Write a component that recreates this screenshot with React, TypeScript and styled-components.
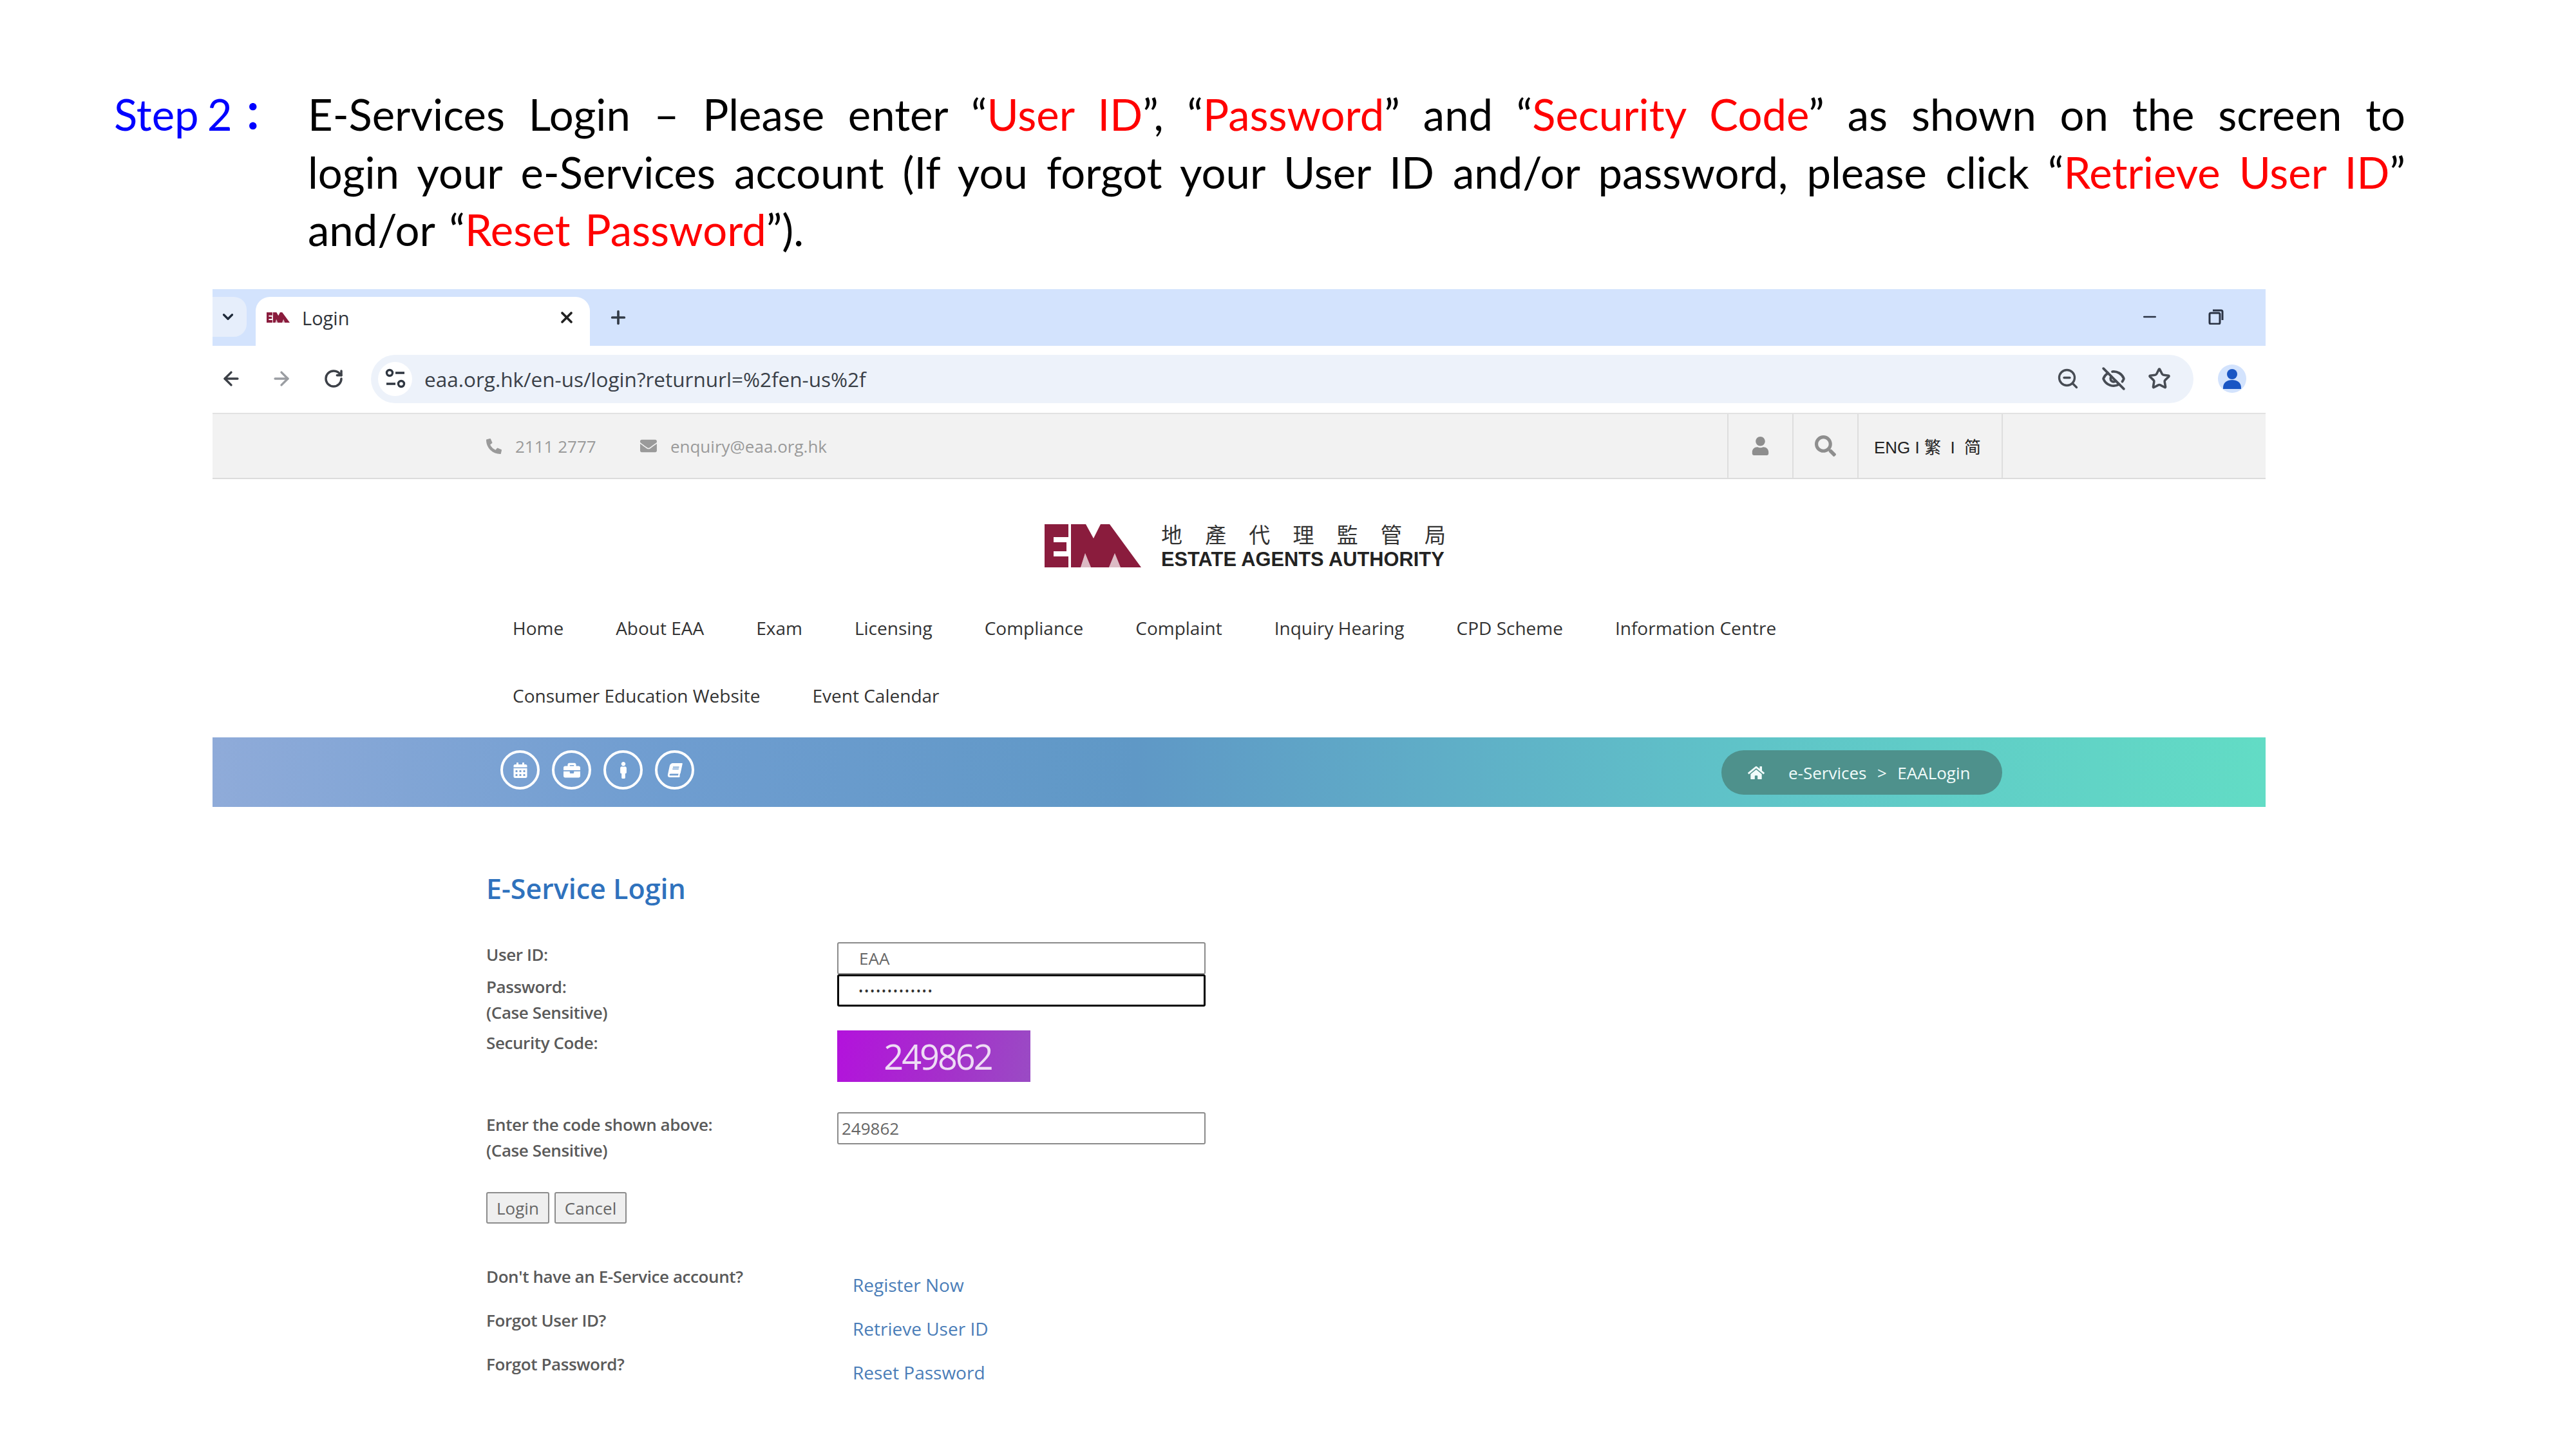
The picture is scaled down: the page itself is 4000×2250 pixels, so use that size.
import React from "react";
import styled, { createGlobalStyle } from "styled-components";
import { ArrowLeft, ArrowRight, ChevronDown, EyeOff, Minus, Plus, RotateCw, Star, X, ZoomOut } from "lucide-react";
import { FaBook, FaBriefcase, FaCalendarAlt, FaEnvelope, FaHome, FaMale, FaPhoneAlt, FaSearch, FaUser } from "react-icons/fa";

const GlobalStyle = createGlobalStyle`
  html, body { margin: 0; padding: 0; background: #fff; }
  #root { width: 4000px; height: 2250px; overflow: hidden; }
  * { box-sizing: border-box; }
`;

const Page = styled.div`
  width: 4000px;
  height: 2250px;
  padding: 133px 265px 0 177px;
  background: #fff;
`;

const Instruction = styled.div`
  display: flex;
  height: 269px;
  font: 400 67px/89.5px Lato, "Noto Sans", sans-serif;
  color: #000;
`;

const StepLabel = styled.div`
  flex: 0 0 301px;
  color: #0000ff;
  white-space: nowrap;
  word-spacing: -4px;
`;

const Colon = styled.span`
  margin-left: 2px;
  font-family: "Noto Sans CJK TC", sans-serif;
  font-weight: 700;
  font-size: 60px;
  line-height: 1;
`;

const InstructionText = styled.div`
  flex: 1;
`;

const Line = styled.div<{ $justify?: boolean }>`
  text-align: ${(p) => (p.$justify ? "justify" : "left")};
  text-align-last: ${(p) => (p.$justify ? "justify" : "left")};
  word-spacing: ${(p) => (p.$justify ? 0 : 6)}px;
`;

const Red = styled.span`
  color: #ff0000;
`;

const Browser = styled.div`
  width: 3188px;
  margin: 47px 0 0 153px;
`;

const TabStrip = styled.div`
  height: 88px;
  padding-top: 12px;
  display: flex;
  background: #d3e3fd;
`;

const TabMenu = styled.div`
  width: 53px;
  height: 62px;
  padding-right: 5px;
  border-radius: 0 20px 20px 0;
  background: #e6eefb;
  color: #1f2a3a;
  display: flex;
  align-items: center;
  justify-content: center;
`;

const Tab = styled.div`
  width: 519px;
  margin-left: 14px;
  padding: 0 22px 12px 17px;
  border-radius: 22px 22px 0 0;
  background: #fff;
  display: flex;
  align-items: center;
  font: 400 29px "Open Sans", sans-serif;
  color: #30343a;
`;

const TabTitle = styled.span`
  margin-left: 19px;
  flex: 1;
`;

const NewTab = styled.div`
  margin: 0 0 12px 28px;
  display: flex;
  align-items: center;
  color: #333c48;
`;

const WindowButtons = styled.div`
  margin: 0 65px 14px auto;
  display: flex;
  align-items: center;
  gap: 76px;
  color: #2a3344;
`;

const Toolbar = styled.div`
  height: 104px;
  padding: 0 30px 2px 12px;
  display: flex;
  align-items: center;
  background: #fff;
`;

const NavIcons = styled.div`
  width: 234px;
  display: flex;
  align-items: center;
  gap: 44px;
`;

const ReloadIcon = styled(RotateCw)`
  margin-left: 4px;
`;

const AddressBar = styled.div`
  flex: 1;
  height: 75px;
  padding: 0 35px 0 11px;
  border-radius: 38px;
  background: #edf2fa;
  display: flex;
  align-items: center;
`;

const TuneBadge = styled.div`
  width: 53px;
  height: 53px;
  border-radius: 50%;
  background: #fff;
  display: flex;
  align-items: center;
  justify-content: center;
  flex: none;
`;

const Url = styled.div`
  flex: 1;
  margin-left: 19px;
  font: 400 31.5px "Open Sans", sans-serif;
  color: #3a4048;
`;

const AddressActions = styled.div`
  display: flex;
  align-items: center;
  gap: 34px;
  color: #474c54;
`;

const ProfileBadge = styled.div`
  width: 44px;
  height: 44px;
  margin-left: 38px;
  border-radius: 50%;
  overflow: hidden;
  background: #d3e3fd;
  flex: none;
`;

const UtilityBar = styled.div`
  height: 103px;
  padding-left: 425px;
  display: flex;
  background: #f2f2f2;
  border-top: 2px solid #e2e2e2;
  border-bottom: 2px solid #dcdcdc;
`;

const Contact = styled.div<{ $width: number }>`
  width: ${(p) => p.$width}px;
  display: flex;
  align-items: center;
  gap: 21px;
  font: 400 26px "Open Sans", sans-serif;
  color: #9a9a9a;
`;

const UtilityCells = styled.div`
  margin-left: 1398px;
  display: flex;
`;

const UtilityCell = styled.div<{ $width: number }>`
  width: ${(p) => p.$width}px;
  border-right: 2px solid #dedede;
  display: flex;
  align-items: center;
  justify-content: center;
  color: #8e8e8e;
  &:first-of-type {
    border-left: 2px solid #dedede;
  }
`;

const LangCell = styled(UtilityCell)`
  padding-right: 8px;
  font: 400 26px "Liberation Sans", "Noto Sans CJK TC", sans-serif;
  color: #222;
  white-space: pre;
`;

const Site = styled.div`
  background: #fff;
`;

const LogoRow = styled.div`
  height: 147px;
  padding: 70px 0 0 1292px;
  display: flex;
  gap: 31px;
`;

const LogoText = styled.div`
  width: 442px;
`;

const LogoChinese = styled.div`
  margin-top: -4px;
  display: flex;
  justify-content: space-between;
  font: 400 33px/38px "Noto Sans CJK TC", sans-serif;
  color: #333;
`;

const LogoEnglish = styled.div`
  margin-top: 3px;
  font: 700 30.8px/36px "Liberation Sans", sans-serif;
  color: #222;
  white-space: nowrap;
`;

const Nav = styled.div`
  padding: 65px 0 0 466px;
  width: 2700px;
  display: flex;
  flex-wrap: wrap;
  column-gap: 81px;
  row-gap: 67px;
  font: 400 28px/38px "Open Sans", sans-serif;
  color: #333;
`;

const Banner = styled.div`
  height: 108px;
  margin-top: 46px;
  padding: 20px 409px 0 447px;
  display: flex;
  justify-content: space-between;
  background: linear-gradient(90deg, #8fabd9 0%, #6f9dd0 22%, #5f98c6 45%, #5fc4c8 75%, #62dcc5 100%);
`;

const CircleIcons = styled.div`
  display: flex;
  gap: 19px;
`;

const CircleIcon = styled.div`
  width: 61px;
  height: 61px;
  border: 4px solid #fff;
  border-radius: 50%;
  color: #fff;
  display: flex;
  align-items: center;
  justify-content: center;
`;

const SlantedBook = styled(FaBook)`
  transform: skewX(-12deg);
`;

const Breadcrumb = styled.div`
  width: 436px;
  height: 69px;
  border-radius: 35px;
  padding-left: 41px;
  background: #4e918c;
  color: #f0fbfa;
  display: flex;
  align-items: center;
  font: 400 26px "Open Sans", sans-serif;
`;

const CrumbText = styled.span`
  margin-left: 37px;
  white-space: pre;
  word-spacing: 1.5px;
`;

const FormArea = styled.div`
  padding: 98px 0 0 425px;
`;

const Title = styled.h1`
  margin: 0 0 54px;
  font: 600 43px/58px "Open Sans", sans-serif;
  color: #2f72bd;
`;

const FormRow = styled.div<{ $height: number }>`
  display: grid;
  grid-template-columns: 545px 572px;
  height: ${(p) => p.$height}px;
  align-content: start;
`;

const Label = styled.div`
  font: 600 26px/39.5px "Open Sans", sans-serif;
  color: #5a5a5a;
  letter-spacing: -0.4px;
`;

const Input = styled.div<{ $focused?: boolean; $inset: number }>`
  height: 50px;
  padding-left: ${(p) => p.$inset}px;
  border: ${(p) => (p.$focused ? "3px solid #000" : "2px solid #8a8a8a")};
  border-radius: 3px;
  background: #fff;
  display: flex;
  align-items: center;
  font: 400 26px "Open Sans", sans-serif;
  color: #666;
`;

const Dots = styled.span`
  font-size: 14px;
  letter-spacing: 3.7px;
  color: #333;
  font-weight: 700;
`;

const Captcha = styled.div`
  width: 300px;
  height: 80px;
  padding-left: 12px;
  background: linear-gradient(100deg, #b312dc 0%, #a52fcb 55%, #9a4bc4 100%);
  color: #eedcf5;
  font: 400 54px/80px "Open Sans", sans-serif;
  letter-spacing: -3px;
  text-align: center;
`;

const Buttons = styled.div`
  display: flex;
  gap: 8px;
  margin: 44px 0 63px;
`;

const Button = styled.div`
  height: 49px;
  padding: 0 14px;
  border: 2px solid #8c8c8c;
  border-radius: 3px;
  background: #efefef;
  display: flex;
  align-items: center;
  font: 400 26px "Open Sans", sans-serif;
  color: #666;
`;

const LinkCell = styled.div`
  padding: 13px 0 0 24px;
  font: 400 28px/39.5px "Open Sans", sans-serif;
  color: #4a7db8;
`;

const TuneIcon = () => (
  <svg width="32" height="36" viewBox="0 0 32 36" fill="none" stroke="#2f3640" strokeWidth="3.4">
    <circle cx="7" cy="9" r="4.5" />
    <path d="M16 9h14M2 26h14" />
    <circle cx="25" cy="26" r="4.5" />
  </svg>
);

const RestoreIcon = () => (
  <svg width="24" height="24" viewBox="0 0 24 24" fill="none" stroke="currentColor" strokeWidth="3">
    <rect x="2" y="6" width="16" height="17" rx="2" />
    <path d="M7 2h13a2 2 0 0 1 2 2v13" />
  </svg>
);

const ProfileIcon = () => (
  <svg width="44" height="44" viewBox="0 0 44 44" fill="#1a56c4">
    <circle cx="22" cy="15" r="8" />
    <path d="M8 36c0-8 6-12 14-12s14 4 14 12v2H8z" />
  </svg>
);

const EaaMark = ({ width, height }: { width: number; height: number }) => (
  <svg width={width} height={height} viewBox="0 0 150 67" fill="#8a1c3d">
    <path d="M0 0H37V20H14V28H34V42H14V50H37V67H0Z" />
    <path d="M41 67V0H64L76 22L87 0H101L150 67H118L109 45L100 67H72L63 45L56 67Z" />
    <path d="M72 67L63 45L56 67ZM118 67L109 45L100 67Z" opacity="0.3" />
  </svg>
);

const navItems = [
  "Home",
  "About EAA",
  "Exam",
  "Licensing",
  "Compliance",
  "Complaint",
  "Inquiry Hearing",
  "CPD Scheme",
  "Information Centre",
  "Consumer Education Website",
  "Event Calendar",
];
const logoChars = ["地", "產", "代", "理", "監", "管", "局"];

export default function App() {
  return (
    <Page>
      <GlobalStyle />
      <Instruction>
        <StepLabel>
          Step 2<Colon>：</Colon>
        </StepLabel>
        <InstructionText>
          <Line $justify>
            E-Services Login – Please enter “<Red>User ID</Red>”, “<Red>Password</Red>” and “<Red>Security Code</Red>” as shown on the screen to
          </Line>
          <Line $justify>
            login your e-Services account (If you forgot your User ID and/or password, please click “<Red>Retrieve User ID</Red>”
          </Line>
          <Line>
            and/or “<Red>Reset Password</Red>”).
          </Line>
        </InstructionText>
      </Instruction>

      <Browser>
        <TabStrip>
          <TabMenu>
            <ChevronDown size={26} strokeWidth={3} />
          </TabMenu>
          <Tab>
            <EaaMark width={36} height={22} />
            <TabTitle>Login</TabTitle>
            <X size={28} strokeWidth={3.2} color="#222" />
          </Tab>
          <NewTab>
            <Plus size={32} strokeWidth={2.8} />
          </NewTab>
          <WindowButtons>
            <Minus size={30} strokeWidth={2} />
            <RestoreIcon />
          </WindowButtons>
        </TabStrip>

        <Toolbar>
          <NavIcons>
            <ArrowLeft size={34} color="#3c4047" strokeWidth={2.4} />
            <ArrowRight size={34} color="#9a9da2" strokeWidth={2.4} />
            <ReloadIcon size={32} color="#3c4047" strokeWidth={2.6} />
          </NavIcons>
          <AddressBar>
            <TuneBadge>
              <TuneIcon />
            </TuneBadge>
            <Url>eaa.org.hk/en-us/login?returnurl=%2fen-us%2f</Url>
            <AddressActions>
              <ZoomOut size={36} strokeWidth={2.2} />
              <EyeOff size={38} strokeWidth={2.4} />
              <Star size={36} strokeWidth={2.4} />
            </AddressActions>
          </AddressBar>
          <ProfileBadge>
            <ProfileIcon />
          </ProfileBadge>
        </Toolbar>

        <UtilityBar>
          <Contact $width={239}>
            <FaPhoneAlt size={24} />
            2111 2777
          </Contact>
          <Contact $width={290}>
            <FaEnvelope size={29} />
            enquiry@eaa.org.hk
          </Contact>
          <UtilityCells>
            <UtilityCell $width={103}>
              <FaUser size={29} />
            </UtilityCell>
            <UtilityCell $width={101}>
              <FaSearch size={33} />
            </UtilityCell>
            <LangCell $width={224}>ENG I 繁  I  简</LangCell>
          </UtilityCells>
        </UtilityBar>

        <Site>
          <LogoRow>
            <EaaMark width={150} height={67} />
            <LogoText>
              <LogoChinese>
                {logoChars.map((c) => (
                  <span key={c}>{c}</span>
                ))}
              </LogoChinese>
              <LogoEnglish>ESTATE AGENTS AUTHORITY</LogoEnglish>
            </LogoText>
          </LogoRow>

          <Nav>
            {navItems.map((n) => (
              <span key={n}>{n}</span>
            ))}
          </Nav>

          <Banner>
            <CircleIcons>
              <CircleIcon>
                <FaCalendarAlt size={24} />
              </CircleIcon>
              <CircleIcon>
                <FaBriefcase size={26} />
              </CircleIcon>
              <CircleIcon>
                <FaMale size={26} />
              </CircleIcon>
              <CircleIcon>
                <SlantedBook size={22} />
              </CircleIcon>
            </CircleIcons>
            <Breadcrumb>
              <FaHome size={26} />
              <CrumbText>e-Services  &gt;  EAALogin</CrumbText>
            </Breadcrumb>
          </Banner>

          <FormArea>
            <Title>E-Service Login</Title>
            <FormRow $height={50}>
              <Label>User ID:</Label>
              <Input $inset={32}>EAA</Input>
            </FormRow>
            <FormRow $height={87}>
              <Label>
                Password:
                <br />
                (Case Sensitive)
              </Label>
              <Input $focused $inset={31}>
                <Dots>•••••••••••••</Dots>
              </Input>
            </FormRow>
            <FormRow $height={127}>
              <Label>Security Code:</Label>
              <Captcha>249862</Captcha>
            </FormRow>
            <FormRow $height={80}>
              <Label>
                Enter the code shown above:
                <br />
                (Case Sensitive)
              </Label>
              <Input $inset={5}>249862</Input>
            </FormRow>
            <Buttons>
              <Button>Login</Button>
              <Button>Cancel</Button>
            </Buttons>
            <FormRow $height={68}>
              <Label>Don't have an E-Service account?</Label>
              <LinkCell>Register Now</LinkCell>
            </FormRow>
            <FormRow $height={68}>
              <Label>Forgot User ID?</Label>
              <LinkCell>Retrieve User ID</LinkCell>
            </FormRow>
            <FormRow $height={68}>
              <Label>Forgot Password?</Label>
              <LinkCell>Reset Password</LinkCell>
            </FormRow>
          </FormArea>
        </Site>
      </Browser>
    </Page>
  );
}
